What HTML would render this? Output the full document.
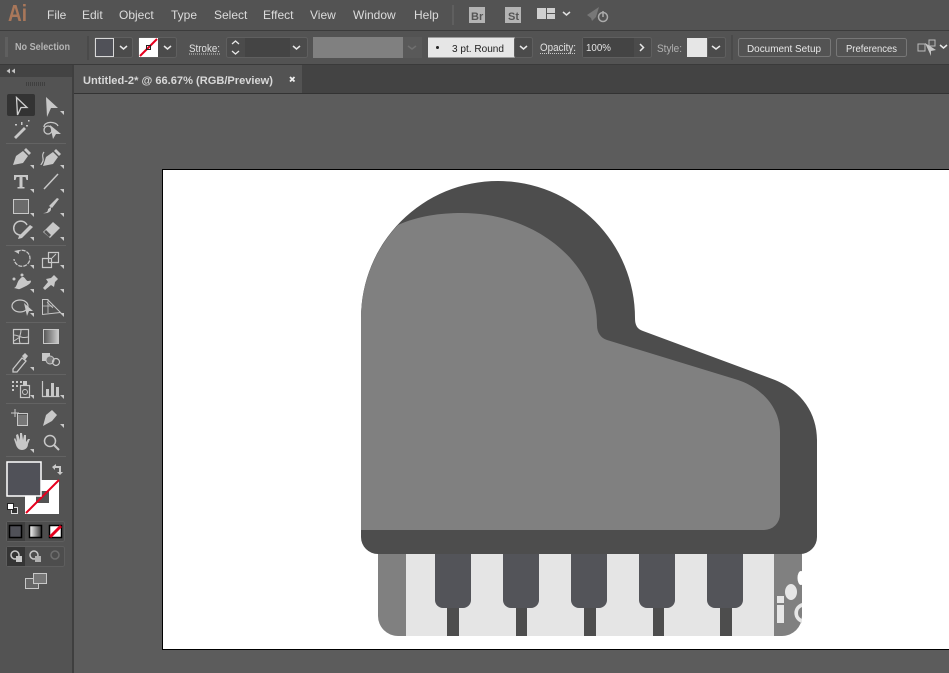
<!DOCTYPE html>
<html><head><meta charset="utf-8"><style>
html,body{margin:0;padding:0;background:#535353}
svg{display:block}
text{font-family:"Liberation Sans",sans-serif}
</style></head><body>
<svg width="949" height="673" viewBox="0 0 949 673" xmlns="http://www.w3.org/2000/svg">
<defs><linearGradient id="g1"><stop offset="0" stop-color="#555"/><stop offset="1" stop-color="#ccc"/></linearGradient>
<linearGradient id="g2"><stop offset="0" stop-color="#fff"/><stop offset="1" stop-color="#333"/></linearGradient></defs>
<rect width="949" height="673" fill="#5c5c5c"/>
<!-- menu bar -->
<rect width="949" height="30" fill="#535353"/>
<rect y="30" width="949" height="1" fill="#3c3c3c"/>
<text x="8" y="21" font-size="23" font-weight="bold" fill="#a9775a" textLength="19" lengthAdjust="spacingAndGlyphs">Ai</text>
<g font-size="12" fill="#dcdcdc">
<text x="47" y="19">File</text><text x="82" y="19">Edit</text><text x="119" y="19">Object</text><text x="171" y="19">Type</text><text x="214" y="19">Select</text><text x="263" y="19">Effect</text><text x="310" y="19">View</text><text x="353" y="19">Window</text><text x="414" y="19">Help</text>
</g>
<rect x="452" y="5" width="2" height="20" fill="#5f5f5f"/>
<rect x="469" y="7" width="16" height="16" fill="#b4b4b4"/><text x="471" y="20" font-size="11" font-weight="bold" fill="#555">Br</text>
<rect x="505" y="7" width="16" height="16" fill="#b4b4b4"/><text x="508" y="20" font-size="11" font-weight="bold" fill="#555">St</text>
<path d="M537 8h9v11h-9zM547 8h8v5h-8zM547 14h8v5h-8z" fill="#d0d0d0"/>
<path d="M563 12l3.500 3 3.500-3" fill="none" stroke="#e0e0e0" stroke-width="1.500"/>
<path d="M587 15l12-8-3 10-4 4-1-3z" fill="#777"/>
<circle cx="603" cy="17" r="4.500" fill="none" stroke="#aaa" stroke-width="1.500"/><path d="M603 11v6" stroke="#aaa" stroke-width="1.500"/>
<!-- control bar -->
<rect y="31" width="949" height="33" fill="#535353"/>
<rect y="64" width="949" height="1" fill="#3a3a3a"/>
<path d="M5 38h3M5 40h3M5 42h3M5 44h3M5 46h3M5 48h3M5 50h3M5 52h3M5 54h3M5 56h3" stroke="#6b6b6b" stroke-width="1"/>
<text x="15" y="50" font-size="10" font-weight="bold" fill="#b5b5b5" textLength="55" lengthAdjust="spacingAndGlyphs">No Selection</text>
<rect x="87" y="36" width="2" height="24" fill="#4a4a4a"/>
<rect x="94.500" y="37.500" width="38" height="20" rx="2" fill="#4b4b4b" stroke="#5f5f5f"/>
<rect x="95.500" y="38.500" width="18" height="18" fill="#505158" stroke="#d8d8d8"/>
<path d="M120 46l3.500 3 3.500-3" fill="none" stroke="#e8e8e8" stroke-width="1.500"/>
<rect x="138.500" y="37.500" width="38" height="20" rx="2" fill="#4b4b4b" stroke="#5f5f5f"/>
<rect x="139" y="38" width="19" height="19" fill="#fff"/>
<path d="M140 56l17-17" stroke="#e6001e" stroke-width="2"/>
<rect x="146.500" y="45.500" width="4" height="4" fill="none" stroke="#222"/>
<path d="M164 46l3.500 3 3.500-3" fill="none" stroke="#e8e8e8" stroke-width="1.500"/>
<text x="189" y="52" font-size="11" fill="#e0e0e0" textLength="31" lengthAdjust="spacingAndGlyphs">Stroke:</text>
<path d="M189 54h31" stroke="#ccc" stroke-dasharray="1 1"/>
<rect x="226.500" y="37.500" width="81" height="20" rx="2" fill="#4b4b4b" stroke="#5f5f5f"/>
<rect x="245" y="38" width="45" height="19" fill="#444"/>
<path d="M232 44l3.500-3 3.500 3M232 51l3.500 3 3.500-3" fill="none" stroke="#e8e8e8" stroke-width="1.300"/>
<path d="M293 46l3.500 3 3.500-3" fill="none" stroke="#e8e8e8" stroke-width="1.500"/>
<rect x="313" y="37" width="90" height="21" fill="#808080"/>
<rect x="403" y="37" width="19" height="21" fill="#595959"/>
<path d="M408 46l4 3 4-3" fill="none" stroke="#6f6f6f" stroke-width="1.500"/>
<rect x="428" y="37.500" width="87" height="20" fill="#e6e6e6"/>
<circle cx="437.500" cy="47.500" r="1.500" fill="#222"/>
<text x="452" y="52" font-size="10.500" fill="#222" textLength="52" lengthAdjust="spacingAndGlyphs">3 pt. Round</text>
<rect x="514.500" y="37.500" width="18" height="20" rx="2" fill="#4b4b4b" stroke="#5f5f5f"/>
<path d="M520 46l3.500 3 3.500-3" fill="none" stroke="#e8e8e8" stroke-width="1.500"/>
<text x="540" y="51" font-size="11" fill="#e0e0e0" textLength="36" lengthAdjust="spacingAndGlyphs">Opacity:</text>
<path d="M540 53.500h36" stroke="#ccc" stroke-dasharray="1 1"/>
<rect x="582.500" y="37.500" width="69" height="20" rx="2" fill="#4b4b4b" stroke="#5f5f5f"/>
<rect x="583" y="38" width="51" height="19" fill="#444"/>
<text x="586" y="51" font-size="10.500" fill="#e4e4e4" textLength="25" lengthAdjust="spacingAndGlyphs">100%</text>
<path d="M640 44l3.500 3.500-3.500 3.500" fill="none" stroke="#e8e8e8" stroke-width="1.500"/>
<text x="657" y="52" font-size="11" fill="#b0b0b0" textLength="25" lengthAdjust="spacingAndGlyphs">Style:</text>
<rect x="687" y="38" width="20" height="19" fill="#e6e6e6"/>
<rect x="707.500" y="37.500" width="18" height="20" rx="2" fill="#4b4b4b" stroke="#5f5f5f"/>
<path d="M712 46l4 3 4-3" fill="none" stroke="#e8e8e8" stroke-width="1.500"/>
<rect x="731" y="35" width="2" height="25" fill="#4a4a4a"/>
<rect x="738.500" y="38.500" width="92" height="18" rx="2" fill="#535353" stroke="#777"/>
<text x="747" y="52" font-size="10.500" fill="#e8e8e8" textLength="74" lengthAdjust="spacingAndGlyphs">Document Setup</text>
<rect x="836.500" y="38.500" width="70" height="18" rx="2" fill="#535353" stroke="#777"/>
<text x="846" y="52" font-size="10.500" fill="#e8e8e8" textLength="51" lengthAdjust="spacingAndGlyphs">Preferences</text>
<path d="M918 44h7v7h-7zM929 40h6v6h-6z" fill="none" stroke="#bbb"/>
<path d="M925 43l11 7-5 1 0 5z" fill="#c4c4c4"/>
<path d="M940 45l3.500 3 3.500-3" fill="none" stroke="#e8e8e8" stroke-width="1.500"/>
<!-- tab row -->
<rect x="0" y="65" width="949" height="29" fill="#434343"/>
<rect x="74" y="65" width="228" height="28" fill="#535353"/>
<rect x="0" y="65" width="72" height="12" fill="#434343"/>
<rect x="74" y="93" width="875" height="1" fill="#333"/>
<text x="83" y="84" font-size="11" font-weight="bold" fill="#d8d8d8" textLength="190" lengthAdjust="spacingAndGlyphs">Untitled-2* @ 66.67% (RGB/Preview)</text>
<path d="M290 77l4.500 4.500M294.500 77l-4.500 4.500" stroke="#eee" stroke-width="1.800"/>
<!-- tool panel -->
<rect x="0" y="77" width="72" height="596" fill="#535353"/>
<rect x="72" y="65" width="2" height="608" fill="#3f3f3f"/>
<path d="M10 68.500l-3.500 2.500 3.500 2.500zM15 68.500l-3.500 2.500 3.500 2.500z" fill="#c4c4c4"/>
<path d="M26.500 82v4M28.500 82v4M30.500 82v4M32.500 82v4M34.500 82v4M36.500 82v4M38.500 82v4M40.500 82v4M42.500 82v4M44.500 82v4" stroke="#3f3f3f"/>
<rect x="7" y="94" width="28" height="22" rx="2" fill="#333"/>
<g fill="#c8c8c8" stroke="none">
<!-- row 1 -->
<path d="M16.500 97.500l10.500 10-6 0-3.500 7.500z" fill="none" stroke="#cfcfcf" stroke-width="1.300"/>
<path d="M46 97l12 11-7 0-4 9z"/>
<!-- row 2 -->
<path d="M14 137l10-10 2 2-10 10z"/><path d="M21 122h1.500v3H21zM26 125h2v1.500h-2zM15 124h2v1.500h-2zM28 120h1.500v1.500H28z"/>
<path d="M44 127c0-6 12-6 14-1" fill="none" stroke="#c8c8c8" stroke-width="1.300"/><circle cx="48" cy="130" r="4" fill="none" stroke="#c8c8c8" stroke-width="1.300"/><path d="M50 125l11 9-5 0-3 5z"/>
<!-- row 3 -->
<path d="M13 165l3-9 7-5 5 5-5 7z"/><path d="M24 150l2-2 5 5-2 2z"/>
<path d="M43 166l3-9 7-5 5 5-5 7z"/><path d="M54 151l2-2 5 5-2 2z"/><path d="M44 152c-3 4 0 6-1 9s-2 3-2 4" fill="none" stroke="#c8c8c8" stroke-width="1.200"/>
<!-- row 4 T -->
<path d="M14 175h14v5h-1.500l-1-3h-3v10h2v1.500h-7V187h2v-10h-3l-1 3H14z"/>
<path d="M44 189l14-15" stroke="#c8c8c8" stroke-width="1.500" fill="none"/>
<!-- row 5 -->
<rect x="13.500" y="199.500" width="15" height="14" fill="#6b6b6b" stroke="#c8c8c8"/>
<path d="M43 213c3 0 5-1 5-4l3-2 0 2c0 3-4 5-8 4zM49 206l8-8 2 1-7 9z"/>
<!-- row 6 -->
<path d="M22 235a7 7 0 1 1 5-10" fill="none" stroke="#c8c8c8" stroke-width="1.500"/><path d="M19 236l11-11 3 2-11 11-4 1z"/>
<path d="M43 232l10-10 7 6-10 10z"/>
<path d="M46 230l5 5 -2 2-5-5z" fill="#535353"/>
<!-- row 7 rotate, scale -->
<path d="M17 252a8 8 0 1 1 -3 7" fill="none" stroke="#c8c8c8" stroke-width="1.300" stroke-dasharray="4 1"/><path d="M14 251l5-1v4z"/>
<path d="M42.500 258.500h9v9h-9zM48.500 252.500h10v10h-10z" fill="none" stroke="#c8c8c8" stroke-width="1.200"/><path d="M52 258l4-4" stroke="#c8c8c8"/>
<!-- row 8 -->
<path d="M14 288c3-1 3-6 5-8s2-3 4-3 3 4 5 4 2-1 3 0c0 3-5 5-9 7s-3 1-8 0z"/><circle cx="14" cy="279" r="1.500"/><circle cx="22" cy="275" r="1.500"/>
<path d="M43 288l5-6-2-3 5-1 3-3 4 4-3 3-1 5-3-2-6 5z"/>
<!-- row 9 -->
<ellipse cx="20" cy="306" rx="8" ry="6" fill="none" stroke="#c8c8c8" stroke-width="1.200"/><path d="M24 303l9 8-4 0-2 5z"/>
<path d="M42.500 299.500v15l18-2-5-5-8-8z" fill="none" stroke="#c8c8c8" stroke-width="1"/><path d="M47 302l6 6M42 306h12M48 299v14" stroke="#c8c8c8" stroke-width=".8"/>
<!-- row 10 mesh,gradient -->
<rect x="13.500" y="329.500" width="15" height="14" fill="none" stroke="#c8c8c8" stroke-width="1.200"/><path d="M14 335c5 0 7 4 14 2M21 330c0 5-3 8-1 13M14 341l6-4" fill="none" stroke="#c8c8c8"/>
<!-- row 11 eyedropper -->
<path d="M13 369l9-11 4 3-9 11h-4z" fill="none" stroke="#c8c8c8" stroke-width="1.300"/><path d="M22 356l3-3 3 3-3 4z"/>
<rect x="42" y="353" width="8" height="8"/><circle cx="50" cy="360" r="4" fill="#777" stroke="#c8c8c8"/><circle cx="56" cy="362" r="3.500" fill="none" stroke="#c8c8c8" stroke-width="1.200"/>
<!-- row 12 symbol, graph -->
<path d="M12 381h2v2h-2zM16 381h2v2h-2zM20 381h2v2h-2zM12 385h2v2h-2zM16 385h2v2h-2zM12 389h2v2h-2z"/>
<rect x="20.500" y="385.500" width="9" height="12" fill="none" stroke="#c8c8c8" stroke-width="1.200"/><circle cx="25" cy="392" r="2.500" fill="none" stroke="#c8c8c8"/><rect x="23" y="381" width="4" height="4"/>
<path d="M42.500 381v15.500h17" fill="none" stroke="#c8c8c8" stroke-width="1.200"/><path d="M46 389h3v7h-3zM51 383h3v13h-3zM56 387h3v9h-3z"/>
<!-- row 13 -->
<path d="M11 413h8M15 409v8" stroke="#c8c8c8"/><rect x="17" y="415" width="10" height="10" fill="#777"/><path d="M17.500 413.500h10v12h-10z" fill="none" stroke="#c8c8c8"/>
<path d="M43 426l3-11 6-5 5 5-5 6z"/>
<!-- row 14 -->
<path d="M14 439l2 6c1 3 3 5 6 5s6-2 6-6l2-5-2 0-2 3 0-7-2 0-1 5-1-7h-2l0 7-2-6-2 1 1 7-2-4z"/>
<circle cx="50" cy="441" r="5.500" fill="none" stroke="#c8c8c8" stroke-width="1.500"/><path d="M54 445l5 5" stroke="#c8c8c8" stroke-width="2"/>
</g>
<path fill="#c8c8c8" d="M34 169v-4h-4zM64 169v-4h-4zM34 193v-4h-4zM64 193v-4h-4zM34 217v-4h-4zM64 217v-4h-4zM34 241v-4h-4zM64 241v-4h-4zM34 269v-4h-4zM64 269v-4h-4zM34 293v-4h-4zM64 293v-4h-4zM34 317v-4h-4zM64 317v-4h-4zM34 371v-4h-4zM34 399v-4h-4zM64 399v-4h-4zM64 428v-4h-4zM34 453v-4h-4zM64 115v-4h-4z"/>
<path d="M6 143.500h60M6 245.500h60M6 322.500h60M6 374.500h60M6 403.500h60M6 456.500h60" stroke="#636363" stroke-width="1"/>
<rect x="43.500" y="329.500" width="15" height="14" fill="url(#g1)" stroke="#c8c8c8"/>
<!-- fill/stroke -->
<rect x="25" y="480" width="34" height="34" fill="#fff"/>
<rect x="36" y="491" width="13" height="12" fill="#535353"/>
<path d="M26 513l33-33" stroke="#e6001e" stroke-width="2"/>
<rect x="7" y="462" width="34" height="34" fill="#505158" stroke="#fff" stroke-width="1.500"/>
<path d="M52 467l4-3v2h5v6h2l-3 3-3-3h2v-4h-4v2z" fill="#c8c8c8"/>
<rect x="11.500" y="507.500" width="6" height="6" fill="#333" stroke="#ddd"/>
<rect x="7.500" y="503.500" width="6" height="6" fill="#fff" stroke="#222"/>
<rect x="6.500" y="521.500" width="58" height="20" rx="2" fill="#4d4d4d" stroke="#5e5e5e"/>
<rect x="7" y="522" width="18" height="19" fill="#3f3f3f"/>
<rect x="9.500" y="525.500" width="12" height="12" fill="#505158" stroke="#000" stroke-width="1.500"/>
<rect x="29.500" y="525.500" width="12" height="12" fill="url(#g2)" stroke="#000" stroke-width="1.500"/>
<rect x="49.500" y="525.500" width="12" height="12" fill="#fff" stroke="#000" stroke-width="1.500"/>
<path d="M50 537l11-11" stroke="#e6001e" stroke-width="3"/>
<rect x="6.500" y="546.500" width="58" height="20" rx="2" fill="#4d4d4d" stroke="#5e5e5e"/>
<rect x="7" y="547" width="18" height="19" fill="#353535"/>
<circle cx="15" cy="555" r="4" fill="none" stroke="#c8c8c8" stroke-width="1.500"/><rect x="16" y="556" width="6" height="6" fill="#c8c8c8"/>
<circle cx="34" cy="555" r="4" fill="none" stroke="#c8c8c8" stroke-width="1.500"/><rect x="35" y="556" width="6" height="6" fill="#b0b0b0"/>
<circle cx="55" cy="555" r="4" fill="none" stroke="#6e6e6e" stroke-width="1.500"/>
<rect x="25.500" y="578.500" width="13" height="10" fill="#666" stroke="#c8c8c8"/>
<rect x="33.500" y="573.500" width="13" height="10" fill="#777" stroke="#c8c8c8"/>
<!-- artboard -->
<rect x="163" y="170" width="786" height="479" fill="#fff"/>
<path d="M162 649.500h787M162.500 170v480M162 169.500h787" stroke="#000" stroke-width="1" fill="none"/>
<!-- piano keys -->
<path d="M378 550H802V616a20 20 0 0 1-20 20H398a20 20 0 0 1-20-20z" fill="#808080"/>
<rect x="406" y="550" width="368" height="86" fill="#e5e5e5"/>
<g fill="#4d4d4d">
<rect x="447" y="600" width="12" height="36"/><rect x="516" y="600" width="11" height="36"/><rect x="584" y="600" width="12" height="36"/><rect x="653" y="600" width="11" height="36"/><rect x="720" y="600" width="12" height="36"/>
</g>
<g fill="#535459">
<path d="M435 550h36v50a8 8 0 0 1-8 8h-20a8 8 0 0 1-8-8z"/>
<path d="M503 550h36v50a8 8 0 0 1-8 8h-20a8 8 0 0 1-8-8z"/>
<path d="M571 550h36v50a8 8 0 0 1-8 8h-20a8 8 0 0 1-8-8z"/>
<path d="M639 550h36v50a8 8 0 0 1-8 8h-20a8 8 0 0 1-8-8z"/>
<path d="M707 550h36v50a8 8 0 0 1-8 8h-20a8 8 0 0 1-8-8z"/>
</g>
<!-- piano body -->
<path d="M361 318A137 137 0 0 1 635 318C635 325 637 329 643 331L775 380C800 390 817 412 817 440V537A17 17 0 0 1 800 554H378A17 17 0 0 1 361 537Z" fill="#4d4d4d"/>
<path d="M361 318A137 137 0 0 1 398 225C418 216 440 213 462 213C535 213 597 262 597 325C597 333 601 338 607 340L738 380C762 388 780 408 780 432V514A16 16 0 0 1 764 530H361Z" fill="#808080"/>
<!-- watermark -->
<g fill="#e6e6e6">
<ellipse cx="791" cy="592" rx="6" ry="8"/>
<rect x="777" y="605" width="7" height="18"/><rect x="777" y="596" width="7" height="7"/>
<path d="M802 603a11 10.500 0 0 0 0 20v-4a6.500 6.500 0 0 1 0-12z"/>
</g>
<rect x="803" y="556" width="30" height="70" fill="#fff"/>
<ellipse cx="801" cy="578" rx="3.500" ry="7" fill="#fff"/>
</svg>
</body></html>
